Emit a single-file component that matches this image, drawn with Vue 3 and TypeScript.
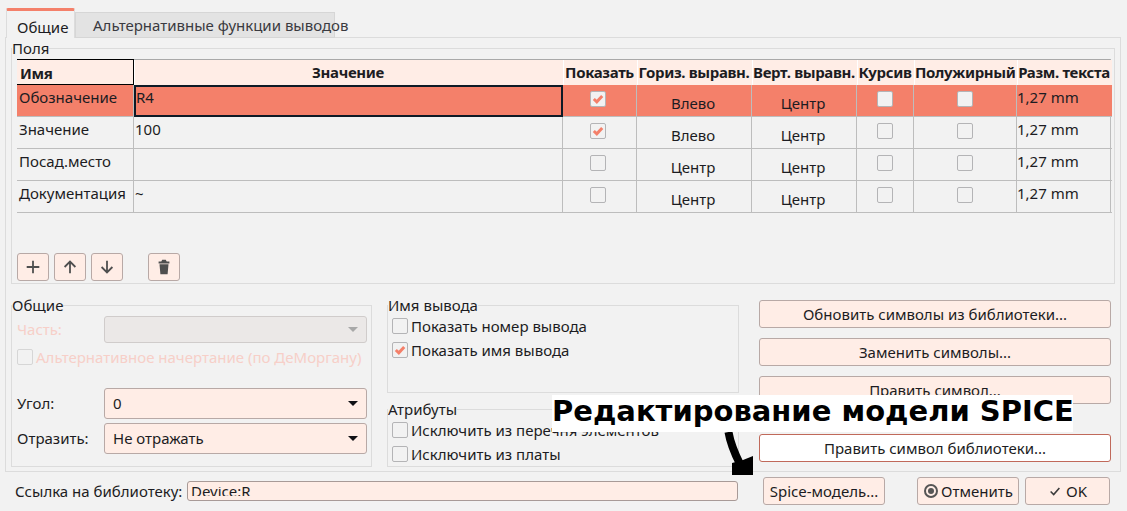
<template>
  <div class="dialog">
    <div class="tabs">
      <div class="tab active">Общие</div>
      <div class="tab">Альтернативные функции выводов</div>
    </div>

    <div class="pane">
      <fieldset class="group fields">
        <legend>Поля</legend>
        <div class="grid">
          <div
            v-for="(col, i) in columns"
            :key="col"
            class="head"
            :class="{ corner: i === 0 }"
          >
            {{ col }}
          </div>
          <template v-for="(row, r) in rows" :key="row.name">
            <div class="cell" :class="{ sel: r === 0 }">{{ row.name }}</div>
            <div class="cell value" :class="{ sel: r === 0, focus: r === 0 }">{{ row.value }}</div>
            <div class="cell box show" :class="{ sel: r === 0 }">
              <span class="check" :class="{ on: row.show }">
                <svg v-if="row.show" viewBox="0 0 14 14"><path d="M2.8 7 L5.8 9.8 L11.2 4" /></svg>
              </span>
            </div>
            <div class="cell mid" :class="{ sel: r === 0 }">{{ row.horiz }}</div>
            <div class="cell mid" :class="{ sel: r === 0 }">Центр</div>
            <div class="cell box" :class="{ sel: r === 0 }"><span class="check"></span></div>
            <div class="cell box" :class="{ sel: r === 0 }"><span class="check"></span></div>
            <div class="cell size" :class="{ sel: r === 0 }">1,27 mm</div>
          </template>
        </div>
        <div class="tools">
          <button class="tool">
            <svg viewBox="0 0 20 20"><path d="M10 3 V17 M3 10 H17" /></svg>
          </button>
          <button class="tool">
            <svg viewBox="0 0 20 20"><path d="M10 17 V4 M4 10 L10 4 L16 10" /></svg>
          </button>
          <button class="tool">
            <svg viewBox="0 0 20 20"><path d="M10 3 V16 M4 10 L10 16 L16 10" /></svg>
          </button>
          <button class="tool trash">
            <svg viewBox="0 0 20 20">
              <path class="fill" d="M8 2 H12 L13 4 H16 V6 H4 V4 H7 Z M5 7 H15 L14 18 H6 Z" />
            </svg>
          </button>
        </div>
      </fieldset>

      <div class="lower">
        <fieldset class="group common">
          <legend>Общие</legend>
          <div class="form-row disabled-row">
            <label class="disabled">Часть:</label>
            <div class="combo off"><span class="caret"></span></div>
          </div>
          <div class="check-row demorgan disabled">
            <span class="check off"></span>
            <span>Альтернативное начертание (по ДеМоргану)</span>
          </div>
          <div class="form-row angle">
            <label>Угол:</label>
            <div class="combo">0<span class="caret"></span></div>
          </div>
          <div class="form-row mirror">
            <label>Отразить:</label>
            <div class="combo">Не отражать<span class="caret"></span></div>
          </div>
        </fieldset>

        <div class="middle">
          <fieldset class="group pin">
            <legend>Имя вывода</legend>
            <div class="check-row">
              <span class="check"></span><span>Показать номер вывода</span>
            </div>
            <div class="check-row">
              <span class="check on">
                <svg viewBox="0 0 14 14"><path d="M2.8 7 L5.8 9.8 L11.2 4" /></svg>
              </span>
              <span>Показать имя вывода</span>
            </div>
          </fieldset>
          <fieldset class="group attrs">
            <legend>Атрибуты</legend>
            <div class="check-row">
              <span class="check"></span><span>Исключить из перечня элементов</span>
            </div>
            <div class="check-row">
              <span class="check"></span><span>Исключить из платы</span>
            </div>
          </fieldset>
        </div>

        <div class="actions">
          <button class="btn">Обновить символы из библиотеки...</button>
          <button class="btn">Заменить символы...</button>
          <button class="btn">Править символ...</button>
          <button class="btn hot">Править символ библиотеки...</button>
        </div>
      </div>
    </div>

    <div class="footer">
      <label>Ссылка на библиотеку:</label>
      <div class="lib">
        <div class="lib-clip"><span>Device:R</span></div>
      </div>
      <button class="btn spice">Spice-модель...</button>
      <button class="btn cancel"><span class="radio"></span>Отменить</button>
      <button class="btn ok">
        <svg viewBox="0 0 16 16"><path d="M3 8.5 L6.5 12 L13 4.5" /></svg>OK
      </button>
    </div>

    <div class="callout">Редактирование модели SPICE</div>
    <svg class="arrow" viewBox="0 0 32 44">
      <path d="M4.5 0 C6 9 9 18 16 32" />
      <polygon points="8,31 19,28 29,24 29,43 8,43" />
    </svg>
  </div>
</template>

<script setup lang="ts">
const columns: string[] = [
  "Имя",
  "Значение",
  "Показать",
  "Гориз. выравн.",
  "Верт. выравн.",
  "Курсив",
  "Полужирный",
  "Разм. текста",
];

const rows = [
  { name: "Обозначение", value: "R4", show: true, horiz: "Влево" },
  { name: "Значение", value: "100", show: true, horiz: "Влево" },
  { name: "Посад.место", value: "", show: false, horiz: "Центр" },
  { name: "Документация", value: "~", show: false, horiz: "Центр" },
];
</script>

<style>
html,
body {
  margin: 0;
  background: #f2f2f2;
}
</style>

<style scoped>
.dialog {
  position: relative;
  width: 1127px;
  height: 511px;
  overflow: hidden;
  box-sizing: border-box;
  padding: 8px 6px 0 5px;
  background: #f2f2f2;
  color: #1c1c22;
  font-family: "Noto Sans", sans-serif;
  font-size: 15px;
  line-height: 19px;
}

.tabs {
  display: flex;
  align-items: flex-end;
  height: 30px;
  padding-left: 1px;
  margin-bottom: -1px;
}

.tab {
  box-sizing: border-box;
  height: 26px;
  width: 260px;
  padding: 3px 0 0 17px;
  color: #3a3a40;
  background: #e3e3e3;
  border: 1px solid #d6d6d6;
  white-space: nowrap;
}

.tab.active {
  position: relative;
  z-index: 1;
  width: 69px;
  height: 30px;
  padding: 7px 0 0 10px;
  background: #f2f2f2;
  border: 1px solid #dcdcdc;
  border-top: 3px solid #f4806a;
  border-bottom: 0;
  border-radius: 2px 2px 0 0;
  color: #1c1c22;
}

.pane {
  box-sizing: border-box;
  height: 435px;
  padding: 2px 5px 0 5px;
  border: 1px solid #dcdcdc;
}

.group {
  box-sizing: border-box;
  min-width: 0;
  margin: 0;
  padding: 0;
  border: 1px solid #dcdcdc;
}

.group legend {
  padding: 0;
  line-height: 16px;
  color: #1c1c22;
}

.fields legend,
.common legend {
  margin-left: -5px;
}

.pin legend,
.attrs legend {
  margin-left: -4px;
}

.fields {
  height: 244px;
  padding: 3px 3px 0 5px;
}

.grid {
  display: grid;
  grid-template-columns: 117px 429px 74px 115px 105px 57px 103px 95px;
  grid-template-rows: 25px repeat(4, 32px);
  border-top: 1px solid #a9a9a9;
  border-right: 1px solid #bdbdbd;
}

.head {
  box-sizing: border-box;
  padding: 3px 2px 0 0;
  background: #ffede6;
  border-left: 1px solid #fff;
  font-weight: 700;
  font-size: 15px;
  letter-spacing: -0.35px;
  text-align: center;
  white-space: nowrap;
}

.head.corner {
  margin-top: -1px;
  padding: 4px 0 0 3px;
  background: #ffede6;
  border: 0;
  border-top: 1px solid #000;
  border-right: 1px solid #000;
  border-bottom: 1px solid #000;
  text-align: left;
}

.cell {
  box-sizing: border-box;
  padding: 3px 0 0 2px;
  border-right: 1px solid #bdbdbd;
  border-bottom: 1px solid #bdbdbd;
  white-space: nowrap;
}

.cell.size {
  padding-left: 0;
  border-right: 0;
}

.cell.value {
  padding-left: 1px;
}

.cell.sel {
  background: #f4806a;
}

.cell.focus {
  border: 2px solid #0e1a26;
  padding: 1px 0 0;
}

.cell.mid {
  padding: 9px 2px 0 0;
  text-align: center;
}

.cell.box {
  padding: 6px 1px 0 0;
  text-align: center;
}

.cell.show {
  padding-right: 3px;
}

.check {
  display: inline-block;
  box-sizing: border-box;
  width: 16px;
  height: 16px;
  flex: none;
  background: #f2f2f2;
  border: 1px solid #b4b4b6;
  border-radius: 2px;
  vertical-align: top;
}

.check.off {
  border-color: #d6d6d6;
}

.check svg {
  display: block;
  width: 14px;
  height: 14px;
}

.check path {
  fill: none;
  stroke: #f4806a;
  stroke-width: 3;
}

.tools {
  display: flex;
  gap: 5px;
  margin-top: 40px;
}

.tool {
  box-sizing: border-box;
  width: 32px;
  height: 28px;
  padding: 4px 6px;
  background: #ffede6;
  border: 1px solid #b8a9a6;
  border-radius: 3px;
}

.tool svg {
  display: block;
  width: 18px;
  height: 18px;
}

.tool path {
  fill: none;
  stroke: #4f4f4f;
  stroke-width: 2;
}

.tool path.fill {
  fill: #4f4f4f;
  stroke: none;
}

.trash {
  margin-left: 20px;
}

.lower {
  display: grid;
  grid-template-columns: 361px 352px 360px;
  column-gap: 15px;
  margin-top: 13px;
}

.common {
  height: 170px;
  width: 361px;
  padding: 3px 4px 0 5px;
}

.form-row {
  display: flex;
  align-items: center;
}

.form-row label {
  width: 87px;
}

.disabled {
  color: #f7cfc8;
}

.combo {
  position: relative;
  box-sizing: border-box;
  flex: 1;
  height: 31px;
  padding: 5px 0 0 8px;
  background: #ffede6;
  border: 1px solid #b8a9a6;
  border-radius: 3px;
}

.combo.off {
  height: 27px;
  background: #ebe8e7;
  border-color: #d0cccb;
}

.caret {
  position: absolute;
  right: 8px;
  top: 12px;
  border-left: 5px solid transparent;
  border-right: 5px solid transparent;
  border-top: 5px solid #101014;
}

.combo.off .caret {
  top: 10px;
  border-top-color: #a8a8a8;
}

.check-row {
  display: flex;
  align-items: center;
  gap: 3px;
  height: 16px;
  white-space: nowrap;
}

.demorgan {
  margin-top: 6px;
}

.angle {
  margin-top: 23px;
}

.mirror {
  margin-top: 4px;
}

.middle {
  display: flex;
  flex-direction: column;
  gap: 8px;
}

.pin {
  height: 96px;
  padding: 5px 0 0 4px;
}

.pin .check-row + .check-row {
  margin-top: 8px;
}

.attrs {
  height: 66px;
  padding: 5px 0 0 4px;
}

.attrs .check-row + .check-row {
  margin-top: 8px;
}

.actions {
  display: flex;
  flex-direction: column;
  padding: 3px 3px 0 5px;
}

.btn {
  box-sizing: border-box;
  height: 28px;
  margin-bottom: 10px;
  padding: 0;
  background: #ffede6;
  border: 1px solid #b8a9a6;
  border-radius: 3px;
  color: #1c1c22;
  font: inherit;
}

.btn.hot {
  margin-top: 20px;
  background: #fff;
  border-color: #c0695a;
}

.footer {
  display: flex;
  align-items: center;
  height: 28px;
  margin-top: 5px;
  padding-left: 10px;
}

.footer .btn {
  margin: 0;
  height: 28px;
}

.footer label {
  width: 172px;
  white-space: nowrap;
}

.lib {
  box-sizing: border-box;
  width: 551px;
  height: 20px;
  padding: 5px 0 0 3px;
  background: #ffede6;
  border: 1px solid #a89a97;
  border-radius: 3px;
}

.lib-clip {
  height: 9px;
  overflow: hidden;
}

.lib-clip span {
  display: block;
  margin-top: -5px;
}

.spice {
  width: 122px;
  margin-left: 25px !important;
}

.cancel {
  display: flex;
  align-items: center;
  gap: 3px;
  width: 102px;
  padding-left: 6px;
  margin-left: 32px !important;
}

.radio {
  box-sizing: border-box;
  width: 14px;
  height: 14px;
  padding: 2px;
  background: #555;
  background-clip: content-box;
  border: 2px solid #555;
  border-radius: 50%;
}

.ok {
  display: flex;
  align-items: center;
  justify-content: center;
  gap: 4px;
  width: 85px;
  margin-left: 6px !important;
}

.ok svg {
  width: 14px;
  height: 14px;
}

.ok path {
  fill: none;
  stroke: #3c3c3c;
  stroke-width: 1.8;
}

.callout {
  position: absolute;
  left: 552px;
  top: 395px;
  width: 521px;
  height: 37px;
  background: #fff;
  color: #000;
  font-family: "DejaVu Sans", sans-serif;
  font-weight: 700;
  font-size: 29px;
  line-height: 33px;
  text-align: center;
  white-space: nowrap;
}

.arrow {
  position: absolute;
  left: 724px;
  top: 432px;
  width: 32px;
  height: 44px;
}

.arrow path {
  fill: none;
  stroke: #000;
  stroke-width: 8;
}
</style>
